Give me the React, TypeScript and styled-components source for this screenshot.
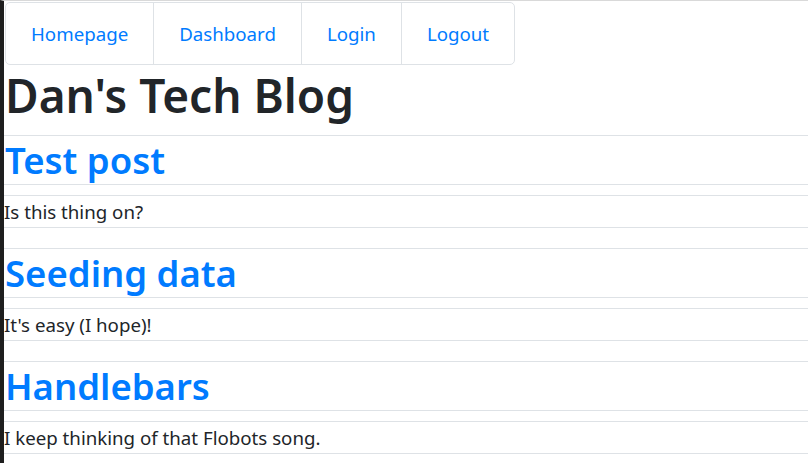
import React from "react";
import styled, { createGlobalStyle } from "styled-components";

const GlobalStyle = createGlobalStyle`
  html, body { margin: 0; padding: 0; }
  body {
    background: #fff;
    border-left: 4px solid #1e1e1e;
    border-top: 1px solid #d9d9d9;
    min-height: 100vh;
    box-sizing: border-box;
    font-family: "Noto Sans", "Open Sans", sans-serif;
    font-size: 18.7px;
    color: #212529;
    overflow: hidden;
  }
  a { color: #007bff; text-decoration: none; }
`;

const Nav = styled.ul`
  display: inline-flex;
  list-style: none;
  margin: 1px 0 0 1px;
  padding: 0;
  border: 1px solid #dee2e6;
  border-radius: 5px;
`;

const NavItem = styled.li`
  & + & {
    border-left: 1px solid #dee2e6;
  }
`;

const NavLink = styled.a`
  display: block;
  padding: 15px 25px;
  line-height: 31px;
`;

const Title = styled.h1`
  margin: 0 0 10px;
  padding-left: 1px;
  font-size: 46px;
  font-weight: 600;
  line-height: 60px;
`;

const PostTitle = styled.h2`
  margin: 0 0 10px;
  padding-left: 1px;
  border-top: 1px solid #dee2e6;
  border-bottom: 1px solid #dee2e6;
  font-size: 36.5px;
  font-weight: 600;
  line-height: 48px;
`;

const PostBody = styled.p`
  margin: 0 0 20px;
  border-top: 1px solid #dee2e6;
  border-bottom: 1px solid #dee2e6;
  line-height: 31px;
`;

const links = ["Homepage", "Dashboard", "Login", "Logout"];

const posts = [
  { title: "Test post", body: "Is this thing on?" },
  { title: "Seeding data", body: "It's easy (I hope)!" },
  { title: "Handlebars", body: "I keep thinking of that Flobots song." },
];

export default function App() {
  return (
    <>
      <GlobalStyle />
      <Nav>
        {links.map((l) => (
          <NavItem key={l}>
            <NavLink href="#">{l}</NavLink>
          </NavItem>
        ))}
      </Nav>
      <Title>Dan's Tech Blog</Title>
      {posts.map((p) => (
        <div key={p.title}>
          <PostTitle>
            <a href="#">{p.title}</a>
          </PostTitle>
          <PostBody>{p.body}</PostBody>
        </div>
      ))}
    </>
  );
}
